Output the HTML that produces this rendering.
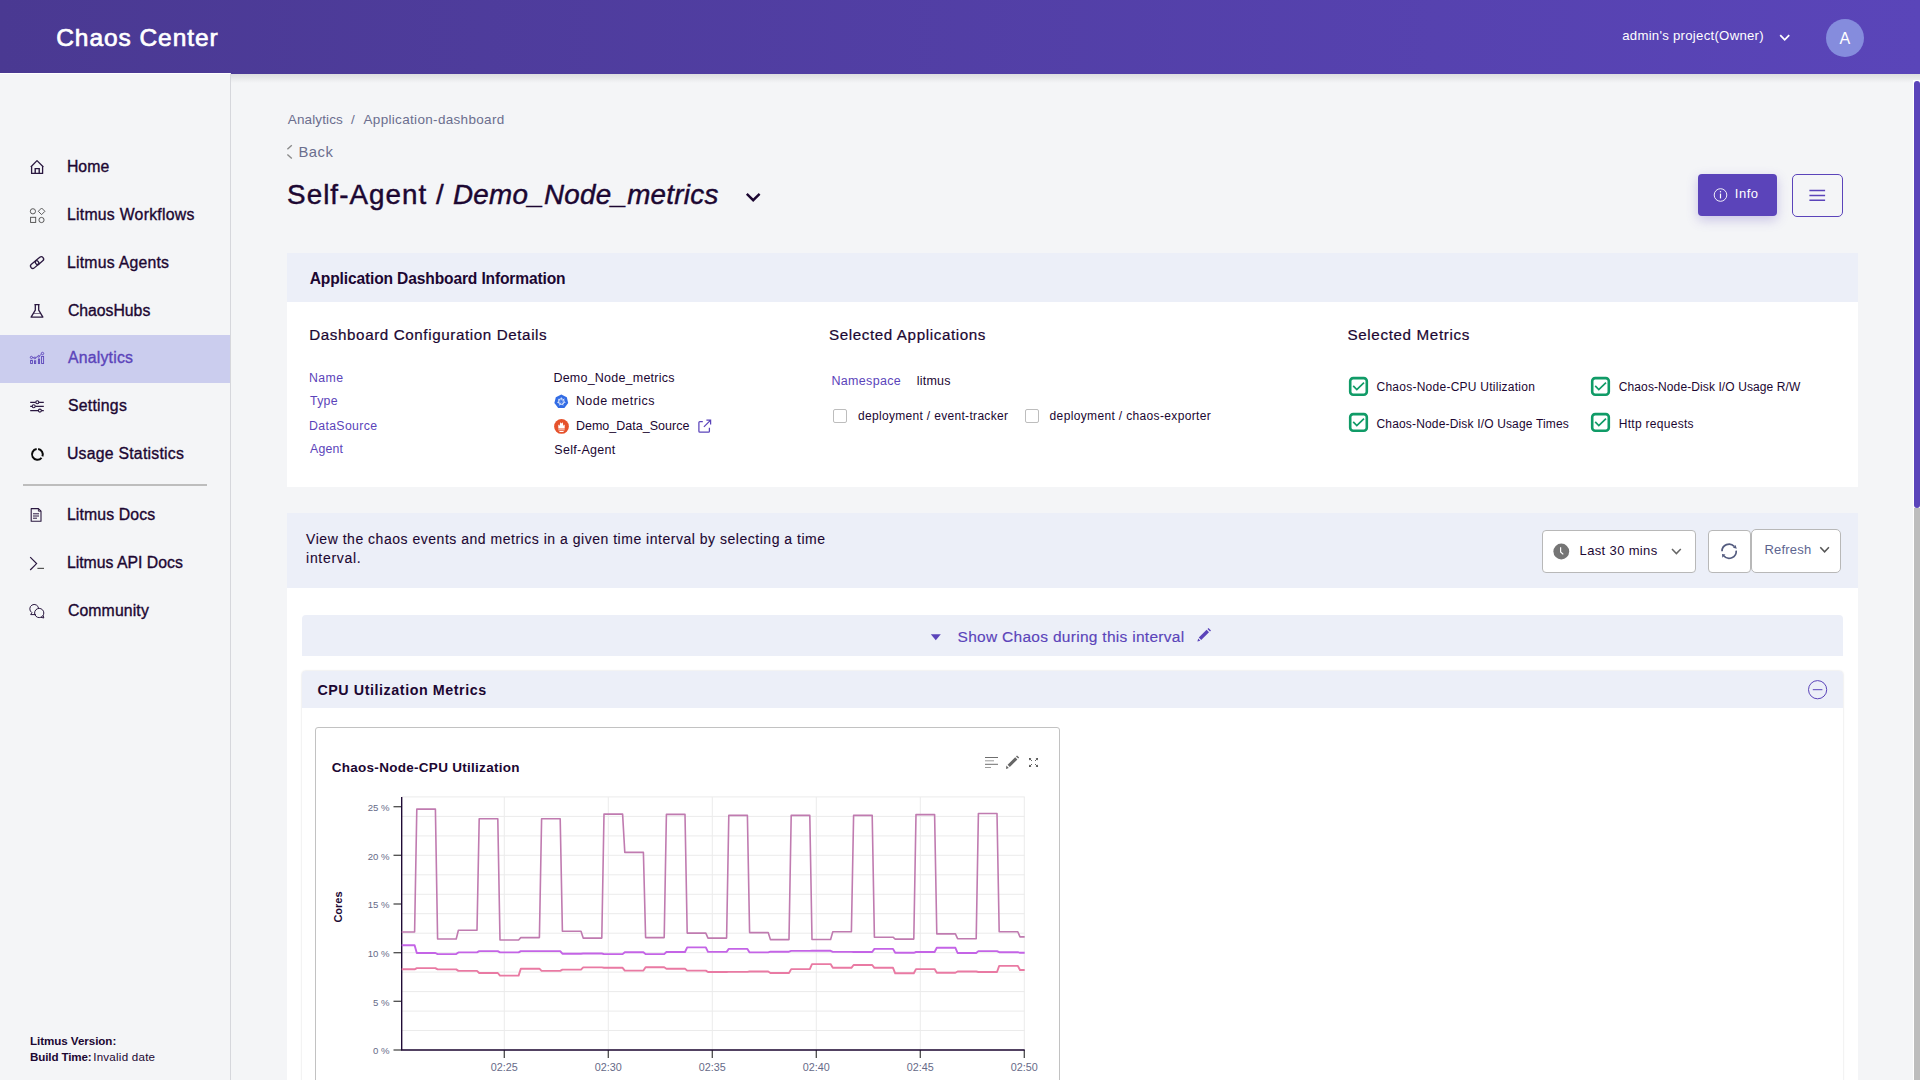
<!DOCTYPE html>
<html><head><meta charset="utf-8"><title>Chaos Center</title>
<style>
html,body{margin:0;padding:0;}
body{width:1920px;height:1080px;overflow:hidden;position:relative;background:#F4F5F7;font-family:"Liberation Sans",sans-serif;}
.abs{position:absolute;}
.t{position:absolute;white-space:nowrap;font-family:"Liberation Sans",sans-serif;}
</style></head>
<body>
<!-- header -->
<div class="abs" style="left:0;top:0;width:1920px;height:74px;background:linear-gradient(90deg,#4A3992 0%,#5A45B9 100%);"></div>
<div class="abs" style="left:231px;top:74px;width:1689px;height:9px;background:linear-gradient(180deg,rgba(60,60,60,0.13),rgba(60,60,60,0));"></div>
<div class="abs" style="left:1826px;top:19px;width:38px;height:38px;border-radius:50%;background:#858CDD;"></div>
<svg class="abs" style="left:1778px;top:33px" width="14" height="10" viewBox="0 0 14 10"><path d="M2.2,2.2 L6.7,6.8 L11.2,2.2" stroke="#fff" stroke-width="1.8" fill="none"/></svg>

<!-- sidebar -->
<div class="abs" style="left:0;top:73px;width:230px;height:1007px;background:#F4F5F7;border-right:1px solid #D6D7DC;border-top:1px solid #ffffff;box-sizing:border-box;width:231px;"></div>
<div class="abs" style="left:0;top:335px;width:230px;height:48px;background:#CBCDEE;"></div>
<div class="abs" style="left:23px;top:484px;width:184px;height:2px;background:#BDBDBD;"></div>
<svg class="abs" style="left:0;top:0" width="231" height="700" viewBox="0 0 231 700" fill="none" stroke="#2A1840" stroke-width="1.3">
  <!-- home -->
  <path d="M30.8,167 L37,160.6 L43.4,167 M31.6,166.2 L31.6,173.4 L42.6,173.4 L42.6,166.2" stroke-linejoin="round"/>
  <path d="M35.2,173.4 L35.2,168.6 L39.2,168.6 L39.2,173.4" stroke-width="1.4"/>
  <!-- workflows -->
  <g stroke="#4A4A4A" stroke-width="0.9">
   <circle cx="32.9" cy="211.3" r="2.6"/>
   <path d="M41.6,208 L44.9,211.3 L41.6,214.6 L38.3,211.3 Z"/>
   <rect x="30.6" y="217.3" width="5.1" height="5.1"/>
   <circle cx="41.5" cy="220" r="2.6"/>
  </g>
  <!-- agents link -->
  <g transform="rotate(-40 37 262.5)">
   <rect x="29.2" y="260.3" width="9.4" height="4.6" rx="2.3"/>
   <rect x="35.4" y="260.3" width="9.4" height="4.6" rx="2.3"/>
  </g>
  <!-- flask -->
  <path d="M34.4,304.6 L39.6,304.6 M35.3,304.6 L35.3,310.2 L31.1,317.1 L42.9,317.1 L38.7,310.2 L38.7,304.6" stroke-linejoin="round"/>
  <path d="M33.5,313.5 L40.5,313.5" stroke-width="0.6"/>
  <!-- analytics -->
  <g stroke="#5B44BA" stroke-width="0.9" fill="none">
   <rect x="30.6" y="360.3" width="1.8" height="3.2"/><rect x="34.5" y="360.8" width="1.2" height="2.7"/><rect x="38.4" y="359" width="1.2" height="4.5"/><rect x="41.6" y="356.4" width="2" height="7.1"/>
   <circle cx="31.4" cy="357.4" r="1.1"/><circle cx="34.9" cy="357.9" r="0.9"/><circle cx="38.7" cy="356.3" r="0.9"/><circle cx="42.5" cy="353.5" r="1.2"/>
   <path d="M32.5,357.6 L34,357.8 M35.8,357.5 L37.8,356.6 M39.6,355.8 L41.4,354.2"/>
  </g>
  <!-- settings -->
  <path d="M30.2,402.3 L43.8,402.3 M30.2,406.3 L43.8,406.3 M30.2,410.6 L43.8,410.6" stroke-width="1.2"/>
  <g fill="#F4F5F7" stroke-width="1.1"><circle cx="37.3" cy="402.3" r="1.5"/><circle cx="33.7" cy="406.3" r="1.5"/><circle cx="39.9" cy="410.6" r="1.5"/></g>
  <!-- usage -->
  <path d="M38.15,449.05 A5.4,5.4 0 0 1 42.41,456.42 M41.54,457.87 A5.4,5.4 0 1 1 36.65,449.05" stroke="#0A0A0A" stroke-width="2" fill="none"/>
  <!-- docs -->
  <path d="M31.2,508.6 L38.4,508.6 L41,511.2 L41,521.3 L31.2,521.3 Z" stroke-linejoin="round" stroke-width="1.1"/>
  <path d="M38.4,508.6 L38.4,511.2 L41,511.2" stroke-width="0.9"/>
  <path d="M33,513.8 L39,513.8 M33,516 L39,516 M33,518.2 L37,518.2" stroke-width="1"/>
  <!-- api -->
  <path d="M30.2,557.2 L36.6,563.6 L30.2,570" stroke-width="1.2"/>
  <path d="M37.4,568.4 L44,568.4" stroke="#555" stroke-width="1.2"/>
  <!-- community -->
  <path d="M35.9,614.6 L30.7,614.6 L31.9,612.6 A4.4,4.4 0 1 1 38.6,608.6" stroke-width="1" stroke-linejoin="round"/>
  <circle cx="39.2" cy="613" r="4.6" stroke-width="1"/>
  <path d="M43.2,615.5 L43.8,618 L41,617.3" stroke-width="1"/>
</svg>

<!-- page head -->
<svg class="abs" style="left:280px;top:140px" width="20" height="25" viewBox="280 140 20 25"><path d="M291.8,145.3 L287.4,149.3 M287.4,154.4 L291.8,158.4" stroke="#8A8A8A" stroke-width="1.4" fill="none"/></svg>
<svg class="abs" style="left:742px;top:189px" width="22" height="16" viewBox="0 0 22 16"><path d="M4.8,4.8 L11.2,11.2 L17.6,4.8" stroke="#1C0732" stroke-width="2.4" fill="none"/></svg>
<div class="abs" style="left:1698px;top:174px;width:79px;height:42px;border-radius:4px;background:#5B44BA;box-shadow:0 4px 12px rgba(91,68,186,0.28);"></div>
<svg class="abs" style="left:1710px;top:185px" width="20" height="20" viewBox="0 0 20 20"><circle cx="10.5" cy="10" r="6.3" stroke="#fff" stroke-width="0.9" fill="none"/><path d="M10.5,8.6 L10.5,13.4" stroke="#fff" stroke-width="1.2"/><circle cx="10.5" cy="6.8" r="0.7" fill="#fff"/></svg>
<div class="abs" style="left:1792px;top:174px;width:51px;height:43px;border-radius:5px;border:1.5px solid #5B44BA;box-sizing:border-box;"></div>
<svg class="abs" style="left:1792px;top:174px" width="51" height="43" viewBox="0 0 51 43"><path d="M17.4,16.5 L33.1,16.5 M17.4,21.4 L33.1,21.4 M17.4,26.3 L33.1,26.3" stroke="#5B44BA" stroke-width="1.5"/></svg>

<!-- panel 1 -->
<div class="abs" style="left:287px;top:253px;width:1571px;height:234px;background:#FFFFFF;"></div>
<div class="abs" style="left:287px;top:253px;width:1571px;height:49px;background:#ECEFF8;"></div>
<svg class="abs" style="left:554px;top:394px" width="16" height="16" viewBox="0 0 16 16">
  <path d="M7.3,0.6 L12.8,3.2 L14.2,9.1 L10.4,13.9 L4.2,13.9 L0.4,9.1 L1.8,3.2 Z" fill="#326CE5"/>
  <circle cx="7.3" cy="7.6" r="2.9" stroke="#fff" stroke-width="0.8" fill="none"/>
  <path d="M7.30,6.40 L7.30,3.30 M8.24,6.85 L10.66,4.92 M8.47,7.87 L11.49,8.56 M7.82,8.68 L9.17,11.47 M6.78,8.68 L5.43,11.47 M6.13,7.87 L3.11,8.56 M6.36,6.85 L3.94,4.92" stroke="#fff" stroke-width="0.6"/>
</svg>
<svg class="abs" style="left:554px;top:418px" width="16" height="17" viewBox="0 0 16 17">
  <circle cx="7.5" cy="8.4" r="7.4" fill="#E6522C"/>
  <path d="M4.3,10.4 L4.3,6.6 L5.6,7.8 L6.3,4.2 L7.5,5.6 L8.7,4.2 L9.4,7.8 L10.7,6.6 L10.7,10.4 Z M4.3,11.4 L10.7,11.4 L10.7,12.3 L4.3,12.3 Z M5.4,13.1 L9.6,13.1 L9.6,13.9 L5.4,13.9 Z" fill="#fff"/>
</svg>
<svg class="abs" style="left:697px;top:419px" width="16" height="15" viewBox="0 0 16 15">
  <path d="M5.8,2.6 L2.9,2.6 Q1.9,2.6 1.9,3.6 L1.9,12.2 Q1.9,13.2 2.9,13.2 L11.4,13.2 Q12.4,13.2 12.4,12.2 L12.4,8.8" stroke="#5B44BA" stroke-width="1.25" fill="none"/>
  <path d="M6.9,7.9 L13.4,1.4 M9.4,1.2 L13.6,1.2 L13.6,5.4" stroke="#5B44BA" stroke-width="1.25" fill="none"/>
</svg>
<div class="abs" style="left:833px;top:409px;width:14px;height:14px;border:1.6px solid #BDBDBD;border-radius:2px;box-sizing:border-box;"></div>
<div class="abs" style="left:1025px;top:409px;width:14px;height:14px;border:1.6px solid #BDBDBD;border-radius:2px;box-sizing:border-box;"></div>
<svg class="abs" style="left:1340px;top:370px" width="280" height="70" viewBox="1340 370 280 70">
 <g fill="none" stroke="#109B67">
  <rect x="1350.2" y="378.1" width="16.6" height="16.6" rx="3" stroke-width="2.6"/>
  <rect x="1592.2" y="378.1" width="16.6" height="16.6" rx="3" stroke-width="2.6"/>
  <rect x="1350.2" y="414.1" width="16.6" height="16.6" rx="3" stroke-width="2.6"/>
  <rect x="1592.2" y="414.1" width="16.6" height="16.6" rx="3" stroke-width="2.6"/>
  <path d="M1353.2,385.9 L1356.8,389.6 L1364,382.6 M1595.2,385.9 L1598.8,389.6 L1606,382.6 M1353.2,421.9 L1356.8,425.6 L1364,418.6 M1595.2,421.9 L1598.8,425.6 L1606,418.6" stroke-width="1.7"/>
 </g>
</svg>

<!-- panel 2 -->
<div class="abs" style="left:287px;top:513px;width:1571px;height:567px;background:#FFFFFF;"></div>
<div class="abs" style="left:287px;top:513px;width:1571px;height:75px;background:#ECEFF8;"></div>
<div class="abs" style="left:1542px;top:530px;width:154px;height:43px;background:#fff;border:1px solid #B8B8B8;border-radius:4px;box-sizing:border-box;"></div>
<svg class="abs" style="left:1552px;top:542px" width="19" height="19" viewBox="0 0 19 19"><circle cx="9.3" cy="9.5" r="7.9" fill="#757575"/><path d="M8.6,5.2 L8.6,9.9 L11.3,12.4" stroke="#fff" stroke-width="1.2" fill="none"/></svg>
<svg class="abs" style="left:1668px;top:544px" width="16" height="14" viewBox="0 0 16 14"><path d="M4,5 L8.4,9.6 L12.8,5" stroke="#666" stroke-width="1.5" fill="none"/></svg>
<div class="abs" style="left:1708px;top:530px;width:43px;height:43px;background:#fff;border:1px solid #B8B8B8;border-radius:4px;box-sizing:border-box;"></div>
<svg class="abs" style="left:1717px;top:539px" width="24" height="24" viewBox="0 0 24 24">
  <path d="M5,12.2 A7.1,7.1 0 0 1 17.2,7.3 M19.2,11.6 A7.1,7.1 0 0 1 6.7,16.8" stroke="#535B7F" stroke-width="1.7" fill="none"/>
  <path d="M18.5,5.9 L16,8.7 L19.8,9.8 Z M5,15 L8.4,15.6 L5.3,18.8 Z" fill="#535B7F"/>
</svg>
<div class="abs" style="left:1751px;top:529px;width:90px;height:44px;background:#fff;border:1px solid #B8B8B8;border-radius:5px;box-sizing:border-box;"></div>
<svg class="abs" style="left:1816px;top:543px" width="16" height="14" viewBox="0 0 16 14"><path d="M4.3,4.2 L8.6,8.8 L12.9,4.2" stroke="#555" stroke-width="1.5" fill="none"/></svg>

<div class="abs" style="left:302px;top:615px;width:1541px;height:41px;background:#ECEFF8;border-radius:4px 4px 0 0;"></div>
<svg class="abs" style="left:928px;top:630px" width="16" height="14" viewBox="0 0 16 14"><path d="M2.8,4.2 L12.8,4.2 L7.8,10.2 Z" fill="#5B44BA"/></svg>
<svg class="abs" style="left:1196px;top:627px" width="17" height="16" viewBox="0 0 17 16"><path d="M2.8,10.6 L10.6,2.8 L13,5.2 L5.2,13 Z M2.2,11.6 L4.3,13.7 L1.4,14.5 Z M11.5,1.9 L12.5,0.9 L15,3.4 L14,4.4 Z" fill="#5B44BA"/></svg>

<div class="abs" style="left:302px;top:671px;width:1541px;height:420px;background:#fff;border-radius:4px 4px 0 0;box-shadow:0 0 2px rgba(0,0,0,0.18);"></div>
<div class="abs" style="left:302px;top:671px;width:1541px;height:37px;background:#ECEFF8;border-radius:4px 4px 0 0;"></div>
<svg class="abs" style="left:1806px;top:678px" width="24" height="24" viewBox="0 0 24 24"><circle cx="11.6" cy="11.7" r="9.1" stroke="#5B44BA" stroke-width="1" fill="none"/><path d="M6.8,11.7 L16.4,11.7" stroke="#5B44BA" stroke-width="1"/></svg>

<div class="abs" style="left:315px;top:727px;width:745px;height:400px;background:#fff;border:1.3px solid #C2C2C2;border-radius:3px;box-sizing:border-box;"></div>
<svg class="abs" style="left:980px;top:750px" width="64" height="24" viewBox="980 750 64 24">
  <path d="M985,757.5 L998,757.5 M985,764.3 L998,764.3" stroke="#6E6E6E" stroke-width="1"/>
  <path d="M985,760.8 L994,760.8 M985,767.5 L991,767.5" stroke="#9C9C9C" stroke-width="1"/>
  <path d="M1007.6,764.8 L1015.2,757.2 L1017.4,759.4 L1009.8,767 Z M1006.4,765.6 L1008.8,768 L1006,768.9 Z M1016,756.4 L1017,755.4 L1019.2,757.6 L1018.2,758.6 Z" fill="#666"/>
  <path d="M1029.3,758.3 L1032,761 M1037.7,758.3 L1035,761 M1029.3,766.7 L1032,764 M1037.7,766.7 L1035,764" stroke="#666" stroke-width="1"/>
  <path d="M1029,758 L1031.4,758 L1029,760.4 Z M1038,758 L1035.6,758 L1038,760.4 Z M1029,767 L1031.4,767 L1029,764.6 Z M1038,767 L1035.6,767 L1038,764.6 Z" fill="#555"/>
</svg>
<svg class="abs" style="left:0;top:0" width="1920" height="1080" viewBox="0 0 1920 1080">
<g stroke="#EBEBEB" stroke-width="1" fill="none"><line x1="401.7" y1="1050.0" x2="1024.7" y2="1050.0"/><line x1="401.7" y1="1030.5" x2="1024.7" y2="1030.5"/><line x1="401.7" y1="1011.1" x2="1024.7" y2="1011.1"/><line x1="401.7" y1="991.6" x2="1024.7" y2="991.6"/><line x1="401.7" y1="972.1" x2="1024.7" y2="972.1"/><line x1="401.7" y1="952.7" x2="1024.7" y2="952.7"/><line x1="401.7" y1="933.2" x2="1024.7" y2="933.2"/><line x1="401.7" y1="913.7" x2="1024.7" y2="913.7"/><line x1="401.7" y1="894.3" x2="1024.7" y2="894.3"/><line x1="401.7" y1="874.8" x2="1024.7" y2="874.8"/><line x1="401.7" y1="855.3" x2="1024.7" y2="855.3"/><line x1="401.7" y1="835.9" x2="1024.7" y2="835.9"/><line x1="401.7" y1="816.4" x2="1024.7" y2="816.4"/><line x1="401.7" y1="796.9" x2="1024.7" y2="796.9"/><line x1="504.3" y1="796.9" x2="504.3" y2="1050"/><line x1="608.3" y1="796.9" x2="608.3" y2="1050"/><line x1="712.3" y1="796.9" x2="712.3" y2="1050"/><line x1="816.3" y1="796.9" x2="816.3" y2="1050"/><line x1="920.3" y1="796.9" x2="920.3" y2="1050"/><line x1="1024.3" y1="796.9" x2="1024.3" y2="1050"/></g>
<g stroke="#4B4B4B" stroke-width="1.3" fill="none"><line x1="393.5" y1="1050.0" x2="401.7" y2="1050.0"/><line x1="393.5" y1="1001.3" x2="401.7" y2="1001.3"/><line x1="393.5" y1="952.7" x2="401.7" y2="952.7"/><line x1="393.5" y1="904.0" x2="401.7" y2="904.0"/><line x1="393.5" y1="855.3" x2="401.7" y2="855.3"/><line x1="393.5" y1="806.7" x2="401.7" y2="806.7"/><line x1="504.3" y1="1050" x2="504.3" y2="1058"/><line x1="608.3" y1="1050" x2="608.3" y2="1058"/><line x1="712.3" y1="1050" x2="712.3" y2="1058"/><line x1="816.3" y1="1050" x2="816.3" y2="1058"/><line x1="920.3" y1="1050" x2="920.3" y2="1058"/><line x1="1024.3" y1="1050" x2="1024.3" y2="1058"/></g>
<path d="M401.7,796.9 L401.7,1050 L1024.7,1050" stroke="#1C0732" stroke-width="1.35" fill="none"/>
<g font-family="Liberation Sans" font-size="9.6" fill="#666A88"><text x="389.5" y="1054.3" text-anchor="end">0 %</text><text x="389.5" y="1005.6" text-anchor="end">5 %</text><text x="389.5" y="957.0" text-anchor="end">10 %</text><text x="389.5" y="908.3" text-anchor="end">15 %</text><text x="389.5" y="859.6" text-anchor="end">20 %</text><text x="389.5" y="811.0" text-anchor="end">25 %</text><text x="504.3" y="1071" text-anchor="middle" font-size="10.8">02:25</text><text x="608.3" y="1071" text-anchor="middle" font-size="10.8">02:30</text><text x="712.3" y="1071" text-anchor="middle" font-size="10.8">02:35</text><text x="816.3" y="1071" text-anchor="middle" font-size="10.8">02:40</text><text x="920.3" y="1071" text-anchor="middle" font-size="10.8">02:45</text><text x="1024.3" y="1071" text-anchor="middle" font-size="10.8">02:50</text></g>
<text transform="translate(342,907) rotate(-90)" text-anchor="middle" font-family="Liberation Sans" font-weight="700" font-size="11" fill="#1C0732">Cores</text>
<g fill="none" stroke-linejoin="round">
<path d="M401.7,932.0 L414.6,932.0 L416.8,809.1 L435.4,809.1 L437.6,939.0 L456.2,939.0 L458.4,930.2 L477.0,930.2 L479.2,818.7 L497.8,818.7 L500.0,940.0 L518.6,940.0 L520.8,937.6 L539.4,937.6 L541.6,818.7 L560.2,818.7 L562.4,931.3 L581.0,931.3 L583.2,938.1 L601.8,938.1 L604.0,814.1 L622.6,814.1 L624.8,852.4 L643.4,852.4 L645.6,937.6 L664.2,937.6 L666.4,814.4 L685.0,814.4 L687.2,933.1 L705.8,933.1 L708.0,938.1 L726.6,938.1 L728.8,815.4 L747.4,815.4 L749.6,932.6 L768.2,932.6 L770.4,939.6 L789.0,939.6 L791.2,815.4 L809.8,815.4 L812.0,939.5 L830.6,939.5 L832.8,931.7 L851.4,931.7 L853.6,815.4 L872.2,815.4 L874.4,937.2 L893.0,937.2 L895.2,939.1 L913.8,939.1 L916.0,814.6 L934.6,814.6 L936.8,933.9 L955.4,933.9 L957.6,938.7 L976.2,938.7 L978.4,813.5 L997.0,813.5 L999.2,931.7 L1017.8,931.7 L1020.0,936.9 L1024.7,936.9" stroke="#C07BB0" stroke-width="1.6"/>
<path d="M401.7,945.2 L414.6,945.2 L416.8,953.0 L435.4,953.0 L437.6,954.1 L456.2,954.1 L458.4,952.4 L477.0,952.4 L479.2,951.1 L497.8,951.1 L500.0,952.4 L518.6,952.4 L520.8,951.1 L539.4,951.1 L541.6,951.1 L560.2,951.1 L562.4,953.7 L581.0,953.7 L583.2,953.5 L601.8,953.5 L604.0,954.1 L622.6,954.1 L624.8,952.2 L643.4,952.2 L645.6,954.1 L664.2,954.1 L666.4,952.0 L685.0,952.0 L687.2,947.4 L705.8,947.4 L708.0,951.9 L726.6,951.9 L728.8,948.9 L747.4,948.9 L749.6,952.4 L768.2,952.4 L770.4,951.7 L789.0,951.7 L791.2,950.9 L809.8,950.9 L812.0,950.8 L830.6,950.8 L832.8,951.9 L851.4,951.9 L853.6,952.0 L872.2,952.0 L874.4,948.9 L893.0,948.9 L895.2,952.8 L913.8,952.8 L916.0,952.0 L934.6,952.0 L936.8,947.8 L955.4,947.8 L957.6,953.0 L976.2,953.0 L978.4,951.1 L997.0,951.1 L999.2,952.2 L1017.8,952.2 L1020.0,952.8 L1024.7,952.8" stroke="#C464E6" stroke-width="1.9"/>
<path d="M401.7,969.3 L414.6,969.3 L416.8,968.1 L435.4,968.1 L437.6,969.4 L456.2,969.4 L458.4,970.9 L477.0,970.9 L479.2,973.0 L497.8,973.0 L500.0,975.6 L518.6,975.6 L520.8,968.7 L539.4,968.7 L541.6,970.9 L560.2,970.9 L562.4,969.6 L581.0,969.6 L583.2,967.4 L601.8,967.4 L604.0,967.8 L622.6,967.8 L624.8,970.6 L643.4,970.6 L645.6,967.2 L664.2,967.2 L666.4,968.7 L685.0,968.7 L687.2,970.6 L705.8,970.6 L708.0,972.0 L726.6,972.0 L728.8,971.9 L747.4,971.9 L749.6,971.5 L768.2,971.5 L770.4,973.0 L789.0,973.0 L791.2,969.1 L809.8,969.1 L812.0,964.1 L830.6,964.1 L832.8,967.8 L851.4,967.8 L853.6,965.0 L872.2,965.0 L874.4,967.8 L893.0,967.8 L895.2,973.3 L913.8,973.3 L916.0,969.1 L934.6,969.1 L936.8,972.8 L955.4,972.8 L957.6,971.5 L976.2,971.5 L978.4,972.0 L997.0,972.0 L999.2,965.9 L1017.8,965.9 L1020.0,970.0 L1024.7,970.0" stroke="#E97AA3" stroke-width="1.9"/>
</g>
</svg>

<!-- scrollbar -->
<div class="abs" style="left:1913px;top:80px;width:7px;height:1000px;background:#FFFFFF;"></div>
<div class="abs" style="left:1914px;top:508px;width:6px;height:572px;background:#BDBDBD;"></div>
<div class="abs" style="left:1914px;top:81px;width:6px;height:427px;background:#5B44BA;border-radius:3px 3px 3px 3px;"></div>

<div class="t" style="left:56.20px;top:26px;font-size:24.5px;line-height:24.5px;color:#FFFFFF;letter-spacing:0.945px;-webkit-text-stroke:0.7px #FFFFFF;">Chaos Center</div>
<div class="t" style="left:1622.20px;top:29px;font-size:13.2px;line-height:13.2px;color:#FFFFFF;letter-spacing:0.266px;">admin's project(Owner)</div>
<div class="t" style="left:1839.50px;top:31px;font-size:16px;line-height:16px;color:#FFFFFF;">A</div>
<div class="t" style="left:66.90px;top:159px;font-size:15.8px;line-height:15.8px;color:#1C0732;letter-spacing:0.049px;-webkit-text-stroke:0.35px #1C0732;">Home</div>
<div class="t" style="left:66.90px;top:207px;font-size:15.8px;line-height:15.8px;color:#1C0732;letter-spacing:0.268px;-webkit-text-stroke:0.35px #1C0732;">Litmus Workflows</div>
<div class="t" style="left:66.90px;top:255px;font-size:15.8px;line-height:15.8px;color:#1C0732;letter-spacing:0.242px;-webkit-text-stroke:0.35px #1C0732;">Litmus Agents</div>
<div class="t" style="left:67.90px;top:303px;font-size:15.8px;line-height:15.8px;color:#1C0732;letter-spacing:-0.018px;-webkit-text-stroke:0.35px #1C0732;">ChaosHubs</div>
<div class="t" style="left:67.90px;top:350px;font-size:15.8px;line-height:15.8px;color:#5B44BA;letter-spacing:0.236px;-webkit-text-stroke:0.35px #5B44BA;">Analytics</div>
<div class="t" style="left:67.90px;top:398px;font-size:15.8px;line-height:15.8px;color:#1C0732;letter-spacing:0.260px;-webkit-text-stroke:0.35px #1C0732;">Settings</div>
<div class="t" style="left:66.90px;top:446px;font-size:15.8px;line-height:15.8px;color:#1C0732;letter-spacing:0.250px;-webkit-text-stroke:0.35px #1C0732;">Usage Statistics</div>
<div class="t" style="left:66.90px;top:507px;font-size:15.8px;line-height:15.8px;color:#1C0732;letter-spacing:0.139px;-webkit-text-stroke:0.35px #1C0732;">Litmus Docs</div>
<div class="t" style="left:66.90px;top:555px;font-size:15.8px;line-height:15.8px;color:#1C0732;-webkit-text-stroke:0.35px #1C0732;">Litmus API Docs</div>
<div class="t" style="left:67.90px;top:603px;font-size:15.8px;line-height:15.8px;color:#1C0732;letter-spacing:0.127px;-webkit-text-stroke:0.35px #1C0732;">Community</div>
<div class="t" style="left:30.00px;top:1035px;font-size:11.6px;line-height:11.6px;color:#1C0732;font-weight:700;letter-spacing:-0.051px;">Litmus Version:</div>
<div class="t" style="left:30.00px;top:1051px;font-size:11.6px;line-height:11.6px;color:#1C0732;font-weight:700;letter-spacing:-0.125px;">Build Time:</div>
<div class="t" style="left:93.20px;top:1051px;font-size:11.6px;line-height:11.6px;color:#1C0732;letter-spacing:0.232px;">Invalid date</div>
<div class="t" style="left:287.80px;top:113px;font-size:13.5px;line-height:13.5px;color:#6B6E8E;letter-spacing:0.129px;">Analytics</div>
<div class="t" style="left:351.00px;top:113px;font-size:13.5px;line-height:13.5px;color:#6B6E8E;">/</div>
<div class="t" style="left:363.50px;top:113px;font-size:13.5px;line-height:13.5px;color:#6B6E8E;letter-spacing:0.321px;">Application-dashboard</div>
<div class="t" style="left:298.40px;top:145px;font-size:14.8px;line-height:14.8px;color:#6B6E8E;letter-spacing:0.534px;">Back</div>
<div class="t" style="left:287.10px;top:181px;font-size:27.8px;line-height:27.8px;color:#1C0732;letter-spacing:1.035px;-webkit-text-stroke:0.45px #1C0732;">Self-Agent /</div>
<div class="t" style="left:452.90px;top:181px;font-size:27.8px;line-height:27.8px;color:#1C0732;font-style:italic;letter-spacing:0.276px;-webkit-text-stroke:0.45px #1C0732;">Demo_Node_metrics</div>
<div class="t" style="left:1734.80px;top:187px;font-size:13px;line-height:13px;color:#FFFFFF;letter-spacing:0.515px;">Info</div>
<div class="t" style="left:309.70px;top:271px;font-size:15.6px;line-height:15.6px;color:#1C0732;font-weight:700;letter-spacing:-0.151px;">Application Dashboard Information</div>
<div class="t" style="left:309.20px;top:327px;font-size:15.2px;line-height:15.2px;color:#1C0732;letter-spacing:0.600px;-webkit-text-stroke:0.22px #1C0732;">Dashboard Configuration Details</div>
<div class="t" style="left:309.00px;top:372px;font-size:12.3px;line-height:12.3px;color:#5B44BA;letter-spacing:0.446px;">Name</div>
<div class="t" style="left:310.00px;top:395px;font-size:12.3px;line-height:12.3px;color:#5B44BA;letter-spacing:0.293px;">Type</div>
<div class="t" style="left:309.00px;top:420px;font-size:12.3px;line-height:12.3px;color:#5B44BA;letter-spacing:0.345px;">DataSource</div>
<div class="t" style="left:310.00px;top:443px;font-size:12.3px;line-height:12.3px;color:#5B44BA;letter-spacing:0.220px;">Agent</div>
<div class="t" style="left:553.40px;top:372px;font-size:12.5px;line-height:12.5px;color:#1C0732;letter-spacing:0.228px;">Demo_Node_metrics</div>
<div class="t" style="left:575.90px;top:395px;font-size:12.5px;line-height:12.5px;color:#1C0732;letter-spacing:0.447px;">Node metrics</div>
<div class="t" style="left:575.90px;top:420px;font-size:12.5px;line-height:12.5px;color:#1C0732;letter-spacing:0.013px;">Demo_Data_Source</div>
<div class="t" style="left:554.30px;top:444px;font-size:12.5px;line-height:12.5px;color:#1C0732;letter-spacing:0.289px;">Self-Agent</div>
<div class="t" style="left:828.90px;top:327px;font-size:15.2px;line-height:15.2px;color:#1C0732;letter-spacing:0.609px;-webkit-text-stroke:0.22px #1C0732;">Selected Applications</div>
<div class="t" style="left:831.50px;top:375px;font-size:12.5px;line-height:12.5px;color:#5B44BA;letter-spacing:0.307px;">Namespace</div>
<div class="t" style="left:916.70px;top:375px;font-size:12.5px;line-height:12.5px;color:#1C0732;letter-spacing:0.222px;">litmus</div>
<div class="t" style="left:858.00px;top:410px;font-size:12px;line-height:12px;color:#1C0732;letter-spacing:0.317px;">deployment / event-tracker</div>
<div class="t" style="left:1049.60px;top:410px;font-size:12px;line-height:12px;color:#1C0732;letter-spacing:0.351px;">deployment / chaos-exporter</div>
<div class="t" style="left:1347.40px;top:327px;font-size:15.2px;line-height:15.2px;color:#1C0732;letter-spacing:0.649px;-webkit-text-stroke:0.22px #1C0732;">Selected Metrics</div>
<div class="t" style="left:1376.50px;top:381px;font-size:12px;line-height:12px;color:#1C0732;letter-spacing:0.253px;">Chaos-Node-CPU Utilization</div>
<div class="t" style="left:1618.80px;top:381px;font-size:12px;line-height:12px;color:#1C0732;letter-spacing:0.100px;">Chaos-Node-Disk I/O Usage R/W</div>
<div class="t" style="left:1376.50px;top:418px;font-size:12px;line-height:12px;color:#1C0732;letter-spacing:0.163px;">Chaos-Node-Disk I/O Usage Times</div>
<div class="t" style="left:1618.80px;top:418px;font-size:12px;line-height:12px;color:#1C0732;letter-spacing:0.286px;">Http requests</div>
<div class="t" style="left:306.10px;top:532px;font-size:14px;line-height:14px;color:#1C0732;letter-spacing:0.518px;-webkit-text-stroke:0.1px #1C0732;">View the chaos events and metrics in a given time interval by selecting a time</div>
<div class="t" style="left:306.10px;top:551px;font-size:14px;line-height:14px;color:#1C0732;letter-spacing:0.684px;-webkit-text-stroke:0.1px #1C0732;">interval.</div>
<div class="t" style="left:1579.60px;top:544px;font-size:13px;line-height:13px;color:#1C0732;letter-spacing:0.354px;">Last 30 mins</div>
<div class="t" style="left:1764.50px;top:543px;font-size:13px;line-height:13px;color:#5E6590;letter-spacing:0.202px;">Refresh</div>
<div class="t" style="left:957.50px;top:629px;font-size:15.5px;line-height:15.5px;color:#5B44BA;letter-spacing:0.291px;-webkit-text-stroke:0.15px #5B44BA;">Show Chaos during this interval</div>
<div class="t" style="left:317.40px;top:683px;font-size:14.3px;line-height:14.3px;color:#1C0732;font-weight:700;letter-spacing:0.560px;">CPU Utilization Metrics</div>
<div class="t" style="left:331.70px;top:761px;font-size:13.5px;line-height:13.5px;color:#1C0732;font-weight:700;letter-spacing:0.284px;">Chaos-Node-CPU Utilization</div>
</body></html>
